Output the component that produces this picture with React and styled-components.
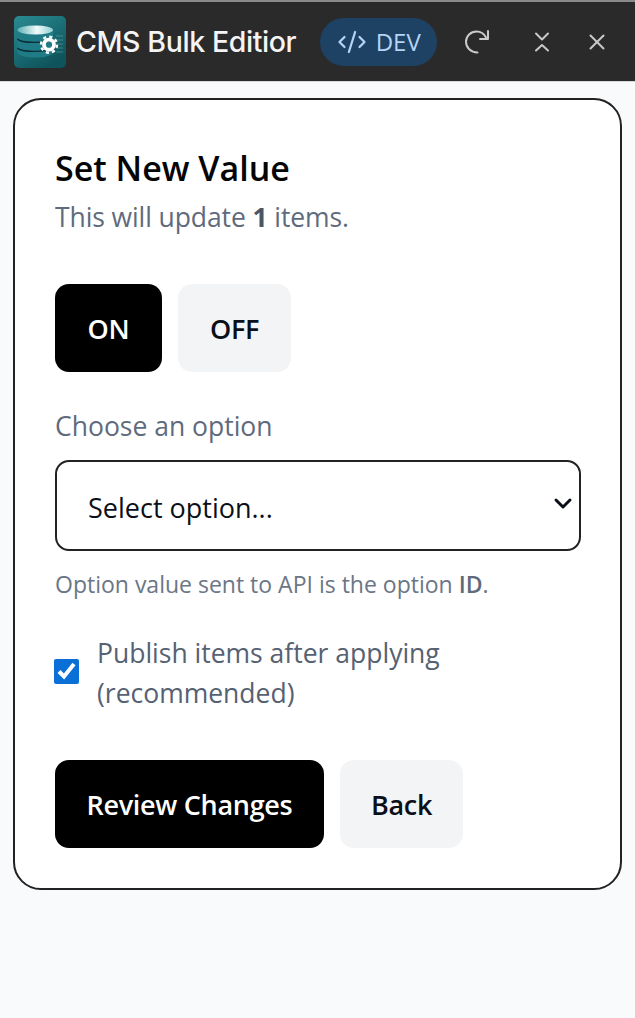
import React from 'react';
import styled, { createGlobalStyle } from 'styled-components';
import { X, CodeXml } from 'lucide-react';

const GlobalStyle = createGlobalStyle`
  html, body {
    margin: 0;
    padding: 0;
    background: #f9fafb;
  }
  * {
    box-sizing: border-box;
  }
`;

const Page = styled.div`
  width: 635px;
  height: 1018px;
  overflow: hidden;
  background: #f9fafb;
  font-family: "Open Sans", "Noto Sans", sans-serif;
`;

const Header = styled.header`
  height: 82px;
  background: #2a2a2a;
  border-top: 2px solid #8a8a8a;
  border-bottom: 1px solid #d8d8d8;
  display: flex;
  align-items: center;
  padding: 0 25px 0 14px;
`;

const AppName = styled.h1`
  margin: 0 0 0 10px;
  font-family: Inter, sans-serif;
  font-size: 28.5px;
  font-weight: 500;
  letter-spacing: -0.4px;
  color: #f4f4f4;
  white-space: nowrap;
`;

const EnvBadge = styled.div`
  margin-left: 24px;
  width: 117px;
  height: 48px;
  border-radius: 24px;
  background: #1d4264;
  color: #b4d4f4;
  display: flex;
  align-items: center;
  justify-content: center;
  gap: 9px;
  font-size: 24px;
  font-weight: 500;
`;

const HeaderActions = styled.div`
  margin-left: auto;
  display: flex;
  align-items: center;
  gap: 30px;
  color: #c9c9c9;
`;

const RedoIcon = styled.svg`
  margin-right: 10px;
`;

const Card = styled.main`
  width: 609px;
  height: 792px;
  margin: 16px 0 0 13px;
  padding: 48px 40px 0;
  background: #fff;
  border: 2px solid #222;
  border-radius: 28px;
`;

const Title = styled.h2`
  margin: 0;
  font-size: 34px;
  line-height: 40px;
  font-weight: 600;
  color: #050505;
`;

const Subtitle = styled.p`
  margin: 13px 0 0;
  font-size: 26.5px;
  line-height: 32px;
  letter-spacing: -0.1px;
  color: #5f6b7c;

  strong {
    font-weight: 700;
    color: #4b5563;
  }
`;

const ButtonRow = styled.div`
  display: flex;
  gap: 16px;
  margin-top: ${p => p.$top}px;
`;

const ActionButton = styled.button`
  height: 88px;
  width: ${p => p.$width}px;
  border: none;
  padding: 0;
  border-radius: 14px;
  font-family: inherit;
  font-size: 27px;
  font-weight: 600;
  letter-spacing: -0.3px;
  background: ${p => (p.$primary ? '#000' : '#f3f4f6')};
  color: ${p => (p.$primary ? '#fff' : '#0b0f19')};
`;

const FieldLabel = styled.label`
  display: block;
  margin-top: 37px;
  font-size: 26.5px;
  line-height: 34px;
  color: #5f6b7c;
`;

const SelectWrap = styled.div`
  position: relative;
  margin-top: 17px;
  width: 526px;
`;

const Select = styled.select`
  display: block;
  width: 100%;
  height: 91px;
  padding: 3px 0 0 31px;
  appearance: none;
  background: #fff;
  border: 2px solid #222;
  border-radius: 14px;
  font-family: inherit;
  font-size: 27px;
  color: #0b0f19;
`;

const SelectChevron = styled.svg`
  position: absolute;
  right: 8px;
  top: 37px;
  pointer-events: none;
`;

const Hint = styled.p`
  margin: 17px 0 0;
  font-size: 23px;
  line-height: 32px;
  color: #6b7686;

  strong {
    font-weight: 600;
    color: #5f6b7c;
  }
`;

const CheckRow = styled.label`
  display: flex;
  align-items: center;
  gap: 18px;
  margin-top: 33px;
  font-size: 26.5px;
  line-height: 40px;
  color: #566172;
`;

const CheckBox = styled.input`
  flex: none;
  width: 25px;
  height: 25px;
  margin: 0 0 4px -1px;
  accent-color: #0b6fd8;
`;

const LogoIcon = () => (
  <svg width="52" height="52" viewBox="0 0 52 52" style={{ flex: 'none' }}>
    <defs>
      <linearGradient id="tile" x1="0" y1="0" x2="0.6" y2="1">
        <stop offset="0" stopColor="#2a8b93" />
        <stop offset="1" stopColor="#0f545c" />
      </linearGradient>
      <linearGradient id="lid" x1="0" y1="0" x2="1" y2="0">
        <stop offset="0" stopColor="#5fb0b6" />
        <stop offset="0.55" stopColor="#f2fbfb" />
        <stop offset="1" stopColor="#8fcdd0" />
      </linearGradient>
    </defs>
    <rect width="52" height="52" rx="5" fill="url(#tile)" />
    <path d="M3.500 14v22c0 3.500 8 5.500 17.750 5.500S39 39.500 39 36V14z" fill="#1f7c86" />
    <ellipse cx="21.250" cy="14" rx="17.750" ry="4.500" fill="url(#lid)" />
    <path d="M3.500 23c3 4.500 29 4.500 35.500 0M3.500 32c3 4.500 29 4.500 35.500 0" fill="none" stroke="#0b2f38" strokeWidth="1.400" />
    <path d="M42 20h7M42 24h7M42 28h7M42 32h7M42 36h7" stroke="#7cc0c4" strokeWidth="0.600" opacity="0.700" />
    <circle cx="35" cy="28.700" r="5" fill="none" stroke="#fff" strokeWidth="3.800" />
    <circle cx="35" cy="28.700" r="8" fill="none" stroke="#fff" strokeWidth="2.400" strokeDasharray="3.140 3.140" />
  </svg>
);

const CollapseIcon = () => (
  <svg width="24" height="24" viewBox="0 0 24 24" fill="none" stroke="currentColor" strokeWidth="2" strokeLinecap="round" strokeLinejoin="round">
    <path d="M6 3.500l6 6 6-6" />
    <path d="M6 20.500l6-5.500 6 5.500" />
  </svg>
);

export default function App() {
  return (
    <Page>
      <GlobalStyle />
      <Header>
        <LogoIcon />
        <AppName>CMS Bulk Editior</AppName>
        <EnvBadge>
          <CodeXml size={30} strokeWidth={1.8} />
          DEV
        </EnvBadge>
        <HeaderActions>
          <RedoIcon width="26" height="26" viewBox="0 0 26 26" fill="none" stroke="currentColor" strokeWidth="2" strokeLinecap="round" strokeLinejoin="round">
            <path d="M22 8.500C20 4.500 16.500 2.500 12.500 2.500 6.700 2.500 2 7 2 12.800 2 18.600 6.700 23.500 13.500 23.500" />
            <path d="M24 2v8h-8" />
          </RedoIcon>
          <CollapseIcon />
          <X size={26} strokeWidth={1.8} />
        </HeaderActions>
      </Header>
      <Card>
        <Title>Set New Value</Title>
        <Subtitle>This will update <strong>1</strong> items.</Subtitle>
        <ButtonRow $top={51}>
          <ActionButton $primary $width={107}>ON</ActionButton>
          <ActionButton $width={113}>OFF</ActionButton>
        </ButtonRow>
        <FieldLabel htmlFor="option">Choose an option</FieldLabel>
        <SelectWrap>
          <Select id="option" defaultValue="">
            <option value="">Select option...</option>
          </Select>
          <SelectChevron width="20" height="14" viewBox="0 0 20 14" fill="none" stroke="#0b0f19" strokeWidth="3" strokeLinecap="round" strokeLinejoin="round">
            <path d="M3 3l7 7 7-7" />
          </SelectChevron>
        </SelectWrap>
        <Hint>Option value sent to API is the option <strong>ID</strong>.</Hint>
        <CheckRow>
          <CheckBox type="checkbox" defaultChecked />
          <span>Publish items after applying<br />(recommended)</span>
        </CheckRow>
        <ButtonRow $top={47}>
          <ActionButton $primary $width={269}>Review Changes</ActionButton>
          <ActionButton $width={123}>Back</ActionButton>
        </ButtonRow>
      </Card>
    </Page>
  );
}
